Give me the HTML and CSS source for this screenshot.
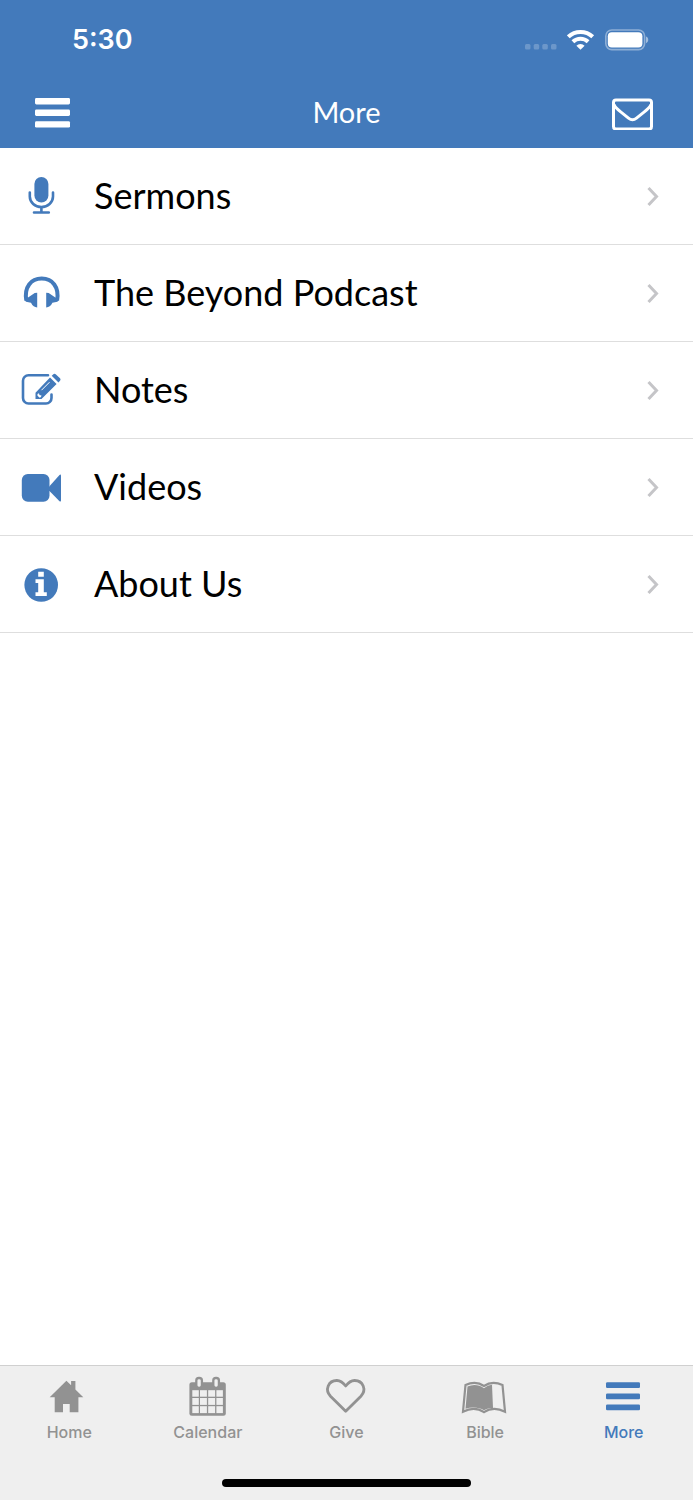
FILE: index.html
```html
<!DOCTYPE html>
<html lang="en">
<head>
    <meta charset="UTF-8">
    <meta name="viewport" content="width=device-width, initial-scale=1.0">
    <title>More</title>
    <link rel="stylesheet" href="styles.css">
</head>
<body>
    <header class="header">
        <div class="status-bar">
            <span class="time">5:30</span>
            <div class="status-icons">
                <svg width="32" height="22" viewBox="0 0 32 22" fill="#fff" opacity="0.22">
                    <rect x="0" y="15" width="5.5" height="5.5" rx="1.5"/>
                    <rect x="8.7" y="15" width="5.5" height="5.5" rx="1.5"/>
                    <rect x="17.3" y="15" width="5.5" height="5.5" rx="1.5"/>
                    <rect x="26" y="15" width="5.5" height="5.5" rx="1.5"/>
                </svg>
                <svg width="28" height="22" viewBox="0 0 28 22">
                    <g fill="none" stroke="#fff" stroke-width="4">
                        <path d="M1.3 7.8a17.6 17.6 0 0 1 24.4 0"/>
                        <path d="M5.9 12.8a11.2 11.2 0 0 1 15.2 0"/>
                    </g>
                    <path d="M13.5 20.8 9.4 16.8a5.8 5.8 0 0 1 8.2 0z" fill="#fff"/>
                </svg>
                <svg width="44" height="22" viewBox="0 0 44 22">
                    <rect x="0.8" y="1" width="38.8" height="19.6" rx="6" fill="none" stroke="#fff" stroke-width="1.6" opacity="0.4"/>
                    <rect x="2.8" y="3.2" width="34.6" height="15.2" rx="4" fill="#fff"/>
                    <path d="M41 7.6c3 1 3 5.6 0 6.6z" fill="#fff" opacity="0.5"/>
                </svg>
            </div>
        </div>
        <div class="nav-bar">
            <button type="button" class="nav-button" aria-label="Menu">
                <svg width="36" height="30" viewBox="0 0 36 30" fill="#fff">
                    <rect x="0" y="0" width="35" height="6.4" rx="1.4"/>
                    <rect x="0" y="11.6" width="35" height="6.4" rx="1.4"/>
                    <rect x="0" y="23.2" width="35" height="6.4" rx="1.4"/>
                </svg>
            </button>
            <h1>More</h1>
            <button type="button" class="nav-button" aria-label="Messages">
                <svg width="46" height="34" viewBox="0 0 46 34" fill="none" stroke="#fff" stroke-width="3" stroke-linejoin="round">
                    <rect x="1.5" y="4" width="38" height="29" rx="2.5"/>
                    <path d="M2 8.500c1 3 4 5.300 7 7.600l7.500 6c2.700 2.200 5.300 2.200 8 0l7.500-6c3-2.300 6-4.600 7-7.600"/>
                </svg>
            </button>
        </div>
    </header>

    <main>
        <ul class="menu">
            <li>
                <a href="#sermons">
                    <svg class="menu-icon" viewBox="0 0 44 44">
                        <rect x="15.400" y="3" width="14" height="25.500" rx="7"/>
                        <path class="line" d="M10.800 18.500v4a11.600 10.500 0 0 0 23.200 0v-4M22.400 33v5M15 38.500h14.800" stroke-linecap="round"/>
                    </svg>
                    <span>Sermons</span>
                    <svg class="chevron" viewBox="0 0 16 24"><path d="M3.500 4l8 8.500-8 8.500"/></svg>
                </a>
            </li>
            <li>
                <a href="#podcast">
                    <svg class="menu-icon" viewBox="0 0 44 44">
                        <path class="band" d="M7.300 29.500C5 16 12 7.600 22.700 7.600S40.400 16 38.100 29.500"/>
                        <path d="M18.200 21.700v14.700c-2.700 0-4.500-1.200-6.200-4.600l-5-1q-2-1.500-.8-3.300l2.500-.8 7-4.800z"/>
                        <path d="M27.200 21.700v14.700c2.700 0 4.500-1.200 6.200-4.600l5-1q2-1.500.8-3.300l-2.500-.8-7-4.800z"/>
                    </svg>
                    <span>The Beyond Podcast</span>
                    <svg class="chevron" viewBox="0 0 16 24"><path d="M3.500 4l8 8.500-8 8.500"/></svg>
                </a>
            </li>
            <li>
                <a href="#notes">
                    <svg class="menu-icon" viewBox="0 0 44 44">
                        <path class="line" d="M29 7.300H9.500a5.500 5.500 0 0 0-5.500 5.500V30a5.500 5.500 0 0 0 5.500 5.500h17.500a5.500 5.500 0 0 0 5.500-5.500V26.500" stroke-linecap="round"/>
                        <path d="M31 9.600l6.600 6.400L22.500 31h-6v-6.200zM32.700 7.700l2-1.700q1-.6 2 .2l4.300 4q1 1 .2 2.200L39.500 14.500z"/>
                        <path d="M22.500 22.200l8-8" stroke="#fff" stroke-width="1"/>
                        <path d="M18.500 26l1.500-.7.500 1.700 2 .5-.5 1.500-1.300.8-2.200-2z" fill="#fff"/>
                    </svg>
                    <span>Notes</span>
                    <svg class="chevron" viewBox="0 0 16 24"><path d="M3.500 4l8 8.500-8 8.500"/></svg>
                </a>
            </li>
            <li>
                <a href="#videos">
                    <svg class="menu-icon" viewBox="0 0 44 44">
                        <rect x="2.800" y="9" width="27.700" height="27.700" rx="6"/>
                        <path d="M30 21.800L40.500 9.900q1.500-1 1.500.8v24.700q0 1.800-1.500.8L30 25.600z"/>
                    </svg>
                    <span>Videos</span>
                    <svg class="chevron" viewBox="0 0 16 24"><path d="M3.500 4l8 8.500-8 8.500"/></svg>
                </a>
            </li>
            <li>
                <a href="#about">
                    <svg class="menu-icon" viewBox="0 0 44 44">
                        <circle cx="22.200" cy="23" r="16.800"/>
                        <path d="M19.200 9.800h5.600v5h-5.600zM16.500 17.300h8.300v12.900h3v3.800H16.500v-3.800h2.700V21h-2.700z" fill="#fff"/>
                    </svg>
                    <span>About Us</span>
                    <svg class="chevron" viewBox="0 0 16 24"><path d="M3.500 4l8 8.500-8 8.500"/></svg>
                </a>
            </li>
        </ul>
    </main>

    <footer class="footer">
        <nav class="tabs">
            <a href="#home" class="tab">
                <svg viewBox="0 0 48 44">
                    <path d="M21.400 5.800l4.700 4.500V6h4.300v8.400l7.900 7.900h-4.900v15h-8.700V29H18v8.300H9.700v-15H4.700z"/>
                </svg>
                Home
            </a>
            <a href="#calendar" class="tab">
                <svg viewBox="0 0 48 44">
                    <rect x="5.400" y="7.300" width="36.400" height="33.500" rx="2.500"/>
                    <g fill="#efefef">
                        <rect x="8.300" y="15.200" width="6.500" height="6.500"/><rect x="16" y="15.200" width="6.900" height="6.500"/><rect x="24.200" y="15.200" width="6.900" height="6.500"/><rect x="32.400" y="15.200" width="6.500" height="6.500"/>
                        <rect x="8.300" y="23" width="6.500" height="6.900"/><rect x="16" y="23" width="6.900" height="6.900"/><rect x="24.200" y="23" width="6.900" height="6.900"/><rect x="32.400" y="23" width="6.500" height="6.900"/>
                        <rect x="8.300" y="31.200" width="6.500" height="6.900"/><rect x="16" y="31.200" width="6.900" height="6.900"/><rect x="24.200" y="31.200" width="6.900" height="6.900"/><rect x="32.400" y="31.200" width="6.500" height="6.900"/>
                    </g>
                    <g fill="#efefef" stroke="#929292" stroke-width="2.300">
                        <rect x="12.300" y="3" width="5.600" height="9.800" rx="2.600"/>
                        <rect x="29.300" y="3" width="5.600" height="9.800" rx="2.600"/>
                    </g>
                </svg>
                Calendar
            </a>
            <a href="#give" class="tab">
                <svg viewBox="0 0 48 44">
                    <path class="line" d="M23.700 36.300L8.500 21.200C5.500 18 5 14 6.200 11 8 6.800 11.500 5.400 15 5.500c3.800.1 6.700 3 8.700 5.500 2-2.500 4.900-5.400 8.700-5.500 3.500-.1 7 1.300 8.800 5.500 1.200 3 .7 7-2.300 10.200z" stroke-linejoin="round"/>
                </svg>
                Give
            </a>
            <a href="#bible" class="tab">
                <svg viewBox="0 0 48 44">
                    <path class="thin" d="M4.500 10C11 7 18 7.500 23 11 28 7.500 35 7 41.500 10L44 36.700c-7-3.500-15-3.500-21 .5C17 33.200 9 33.200 2 36.700z"/>
                    <path d="M6.500 11.500C12 9 18 9.500 23 13.200c2.500-2 5-3.200 8-3.500l1 23.300c-3.500 0-6.200.5-9 2.200-5-3-12-3.500-18.500-1.400z"/>
                </svg>
                Bible
            </a>
            <a href="#more" class="tab active">
                <svg viewBox="0 0 48 44">
                    <rect x="6" y="7.300" width="34" height="5.800" rx="1.300"/>
                    <rect x="6" y="18.400" width="34" height="5.800" rx="1.300"/>
                    <rect x="6" y="29.500" width="34" height="5.800" rx="1.300"/>
                </svg>
                More
            </a>
        </nav>
        <div class="home-indicator"></div>
    </footer>
</body>
</html>
```
FILE: styles.css
```css
* {
    box-sizing: border-box;
}
body {
    margin: 0;
    min-height: 100vh;
    display: flex;
    flex-direction: column;
    background-color: #fff;
    font-family: Lato, sans-serif;
    color: #000;
}
svg {
    display: block;
    flex-shrink: 0;
}

/* Header */
.header {
    background-color: #437abb;
    color: #fff;
}
.status-bar {
    display: flex;
    justify-content: space-between;
    align-items: center;
    height: 79px;
    padding: 0 44px 0 72px;
}
.time {
    font-family: Inter, sans-serif;
    font-size: 27px;
    font-weight: 600;
}
.status-icons {
    display: flex;
    gap: 10px;
}
.nav-bar {
    display: grid;
    grid-template-columns: 1fr auto 1fr;
    align-items: center;
    height: 69px;
    padding: 0 35px 2px;
}
.nav-bar h1 {
    margin: 0;
    padding-bottom: 3px;
    font-size: 29px;
    font-weight: 400;
}
.nav-button {
    justify-self: start;
    padding: 0;
    border: none;
    background: none;
    cursor: pointer;
}
.nav-button:last-child {
    justify-self: end;
}

/* Menu list */
main {
    flex: 1;
}
.menu {
    list-style: none;
    margin: 0;
    padding: 0;
}
.menu a {
    display: flex;
    align-items: center;
    gap: 31px;
    height: 97px;
    padding: 0 32px 0 19px;
    border-bottom: 1px solid #dedede;
    color: #000;
    font-size: 36px;
    text-decoration: none;
}
.menu span {
    flex: 1;
    padding-bottom: 2px;
}
.menu-icon {
    width: 44px;
    height: 44px;
    fill: #437abb;
}
.menu-icon .line,
.menu-icon .band {
    fill: none;
    stroke: #437abb;
    stroke-width: 2.6;
}
.menu-icon .band {
    stroke-width: 4;
}
.chevron {
    width: 16px;
    height: 24px;
    fill: none;
    stroke: #c5c5c8;
    stroke-width: 3;
}

/* Tab bar */
.footer {
    background-color: #efefef;
    border-top: 1px solid #d0d0d0;
    padding-bottom: 13px;
}
.tabs {
    display: flex;
    padding-top: 9px;
}
.tab {
    flex: 1;
    display: flex;
    flex-direction: column;
    align-items: center;
    gap: 3px;
    color: #929292;
    font-family: Inter, sans-serif;
    font-size: 16px;
    font-weight: 500;
    line-height: 20px;
    text-decoration: none;
}
.tab svg {
    width: 48px;
    height: 44px;
    fill: #929292;
}
.tab .line,
.tab .thin {
    fill: none;
    stroke: #929292;
    stroke-width: 2.8;
}
.tab .thin {
    stroke-width: 2.2;
}
.tab.active {
    color: #437abb;
}
.tab.active svg {
    fill: #437abb;
}
.home-indicator {
    width: 36%;
    height: 8px;
    margin: 37px auto 0;
    border-radius: 4px;
    background-color: #000;
}
```
